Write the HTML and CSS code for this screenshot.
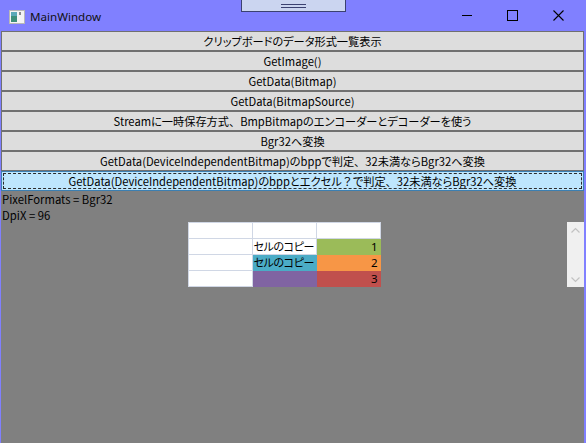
FILE: index.html
```html
<!DOCTYPE html>
<html lang="ja">
<head>
<meta charset="utf-8">
<title>MainWindow</title>
<link rel="stylesheet" href="styles.css">
</head>
<body>
<div class="window">
  <div class="titlebar">
    <svg class="app-icon" width="16" height="14" viewBox="0 0 16 14">
      <rect x="0.5" y="0.5" width="15" height="13" fill="#f4f4f4" stroke="#b8b8b8"/>
      <rect x="2" y="2" width="6" height="10" fill="#3d8f7a"/>
      <rect x="2" y="2" width="6" height="4" fill="#5aa9b8"/>
      <rect x="10" y="2" width="2" height="3" fill="#8a8a8a"/>
    </svg>
    <span class="title">MainWindow</span>
    <div class="caption-buttons">
      <svg class="cap" width="46" height="31" viewBox="0 0 46 31"><line x1="17" y1="15.5" x2="27" y2="15.5" stroke="#000" stroke-width="1"/></svg>
      <svg class="cap" width="46" height="31" viewBox="0 0 46 31"><rect x="16.5" y="10.5" width="10" height="10" fill="none" stroke="#000" stroke-width="1"/></svg>
      <svg class="cap" width="46" height="31" viewBox="0 0 46 31"><path d="M16.5 10.5 L26.5 20.5 M26.5 10.5 L16.5 20.5" stroke="#000" stroke-width="1.1" fill="none"/></svg>
    </div>
    <div class="debug-bar"><span class="grip"></span></div>
  </div>
  <div class="content">
    <div class="btn">クリップボードのデータ形式一覧表示</div>
    <div class="btn">GetImage()</div>
    <div class="btn">GetData(Bitmap)</div>
    <div class="btn">GetData(BitmapSource)</div>
    <div class="btn">Streamに一時保存方式<span class="fw">、</span>BmpBitmapのエンコーダーとデコーダーを使う</div>
    <div class="btn">Bgr32へ変換</div>
    <div class="btn">GetData(DeviceIndependentBitmap)のbppで判定<span class="fw">、</span>32未満ならBgr32へ変換</div>
    <div class="btn focused">GetData(DeviceIndependentBitmap)のbppとエクセル<span class="fw">？</span>で判定<span class="fw">、</span>32未満ならBgr32へ変換</div>
    <div class="info">PixelFormats = Bgr32</div>
    <div class="info">DpiX = 96</div>
    <div class="viewer">
      <div class="image-area">
        <div class="sheet">
          <div class="cell"></div><div class="cell"></div><div class="cell"></div>
          <div class="cell"></div><div class="cell txt">セルのコピー</div><div class="cell num green">1</div>
          <div class="cell"></div><div class="cell txt teal">セルのコピー</div><div class="cell num orange">2</div>
          <div class="cell"></div><div class="cell purple"></div><div class="cell num red">3</div>
        </div>
      </div>
      <div class="vscroll">
        <svg width="17" height="65" viewBox="0 0 17 65">
          <path d="M4.5 10.5 L8.5 6.5 L12.5 10.5" stroke="#c2c2c2" stroke-width="1.2" fill="none"/>
          <path d="M4.5 55.5 L8.5 59.5 L12.5 55.5" stroke="#c2c2c2" stroke-width="1.2" fill="none"/>
        </svg>
      </div>
    </div>
  </div>
</div>
</body>
</html>
```
FILE: styles.css
```css
* { box-sizing: border-box; }
html, body { margin: 0; padding: 0; }
body {
  width: 586px;
  height: 443px;
  overflow: hidden;
  font-family: "Noto Sans CJK JP", "Noto Sans", sans-serif;
  font-feature-settings: "palt";
}
.fw { font-feature-settings: normal; }
.window {
  width: 586px;
  height: 443px;
  display: flex;
  flex-direction: column;
  background: #8080ff;
}
.titlebar {
  position: relative;
  height: 31px;
  flex: none;
  display: flex;
  align-items: center;
  background: #8080ff;
}
.app-icon { margin-left: 9px; margin-top: 2px; flex: none; }
.title {
  margin-left: 5px;
  font-family: "Noto Sans", sans-serif;
  font-size: 11.6px;
  color: #111;
  margin-top: 1px;
}
.caption-buttons {
  margin-left: auto;
  display: flex;
  align-self: flex-start;
  margin-right: 3px;
}
.cap { display: block; }
.debug-bar {
  position: absolute;
  left: 241px;
  top: 0;
  width: 105px;
  height: 12px;
  background: #cbd5f0;
  border: 1px solid #3b4170;
  border-top: none;
}
.grip {
  position: absolute;
  left: 39px;
  top: 4px;
  width: 25px;
  height: 4px;
  border-top: 1px solid #3b4170;
  border-bottom: 1px solid #3b4170;
}
.content {
  flex: 1;
  background: #808080;
  margin-left: 1px;
  margin-right: 2px;
  display: flex;
  flex-direction: column;
}
.btn {
  height: 20px;
  border: 1px solid #707070;
  background: #dddddd;
  font-size: 11.2px;
  line-height: 18px;
  text-align: center;
  color: #000;
  white-space: nowrap;
}
.btn.focused {
  background: #bee6fd;
  border-color: #3c7fb1;
  outline: 1px dashed #2b2b2b;
  outline-offset: -3px;
}
.info {
  height: 16px;
  font-size: 11.3px;
  line-height: 16px;
  padding-left: 1px;
  color: #000;
}
.info:first-of-type { margin-top: 1px; }
.viewer {
  margin-top: -1px;
  display: flex;
  height: 65px;
}
.image-area {
  flex: 1;
  display: flex;
  justify-content: center;
}
.sheet {
  display: grid;
  grid-template-columns: repeat(3, 64px);
  grid-template-rows: repeat(4, 16px);
  width: 193px;
  height: 65px;
  background: #fff;
  border-top: 1px solid #d0d7e5;
  border-left: 1px solid #d0d7e5;
}
.cell {
  border-right: 1px solid #d0d7e5;
  border-bottom: 1px solid #d0d7e5;
  font-size: 11px;
  line-height: 15px;
  white-space: nowrap;
  color: #000;
}
.txt { padding-left: 1px; letter-spacing: -0.4px; }
.num { text-align: right; padding-right: 2px; font-family: "Noto Sans", sans-serif; font-size: 11.5px; }
.green { background: #9bbb59; border-color: #9bbb59; }
.teal { background: #4bacc6; border-color: #4bacc6; }
.orange { background: #f79646; border-color: #f79646; }
.purple { background: #8064a2; border-color: #8064a2; }
.red { background: #c0504d; border-color: #c0504d; }
.vscroll {
  width: 17px;
  flex: none;
  background: #f0f0f0;
}
.vscroll svg { display: block; }
```
